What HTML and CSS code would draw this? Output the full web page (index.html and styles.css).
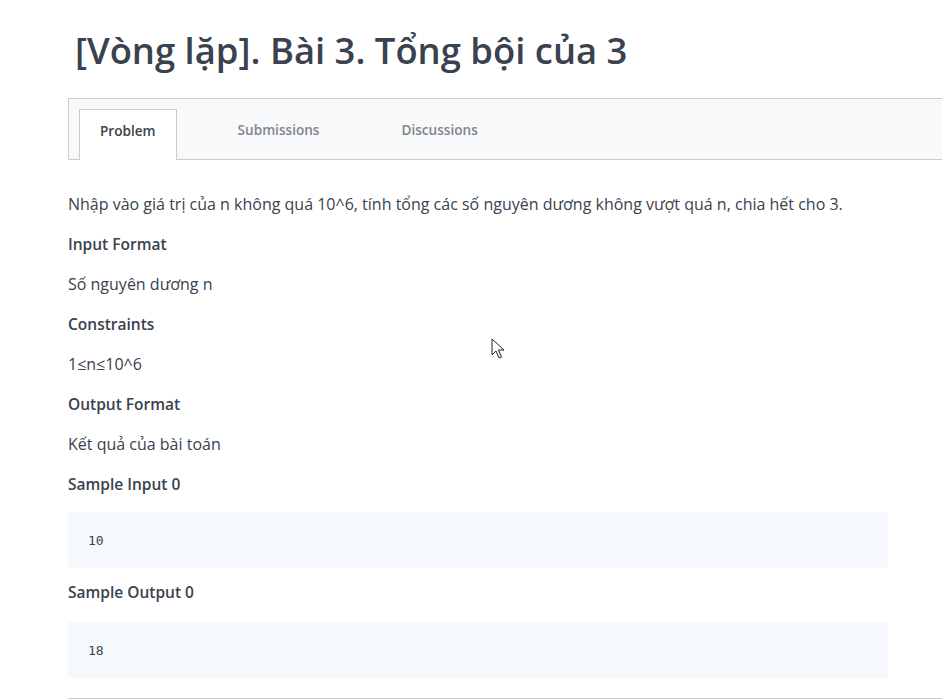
FILE: index.html
```html
<!DOCTYPE html>
<html>
<head>
<meta charset="utf-8">
<link rel="stylesheet" href="styles.css">
</head>
<body>
<div class="page">
  <h1 class="title">[Vòng lặp]. Bài 3. Tổng bội của 3</h1>
  <div class="tabs">
    <div class="tab active">Problem</div>
    <div class="tab">Submissions</div>
    <div class="tab">Discussions</div>
  </div>
  <div class="content">
    <p class="text">Nhập vào giá trị của n không quá 10^6, tính tổng các số nguyên dương không vượt quá n, chia hết cho 3.</p>
    <p class="head">Input Format</p>
    <p class="text">Số nguyên dương n</p>
    <p class="head">Constraints</p>
    <p class="text">1≤n≤10^6</p>
    <p class="head">Output Format</p>
    <p class="text">Kết quả của bài toán</p>
    <p class="head">Sample Input 0</p>
    <pre class="code">10</pre>
    <p class="head">Sample Output 0</p>
    <pre class="code">18</pre>
    <div class="rule"></div>
  </div>
</div>
<svg class="cursor" width="14" height="22" viewBox="0 0 14 22">
  <path d="M1 1 L1 17 L5 13 L8 20 L10.5 19 L7.5 12 L13 12 Z" fill="#fff" stroke="#222" stroke-width="1"/>
</svg>
</body>
</html>
```
FILE: styles.css
```css
html, body {
  margin: 0;
  padding: 0;
  background: #fff;
  overflow: hidden;
}
body {
  font-family: "Open Sans", "Liberation Sans", sans-serif;
  color: #39424e;
  width: 942px;
  height: 699px;
}
.page {
  padding-left: 68px;
}
.title {
  margin: 0;
  padding: 26px 0 0 7px;
  font-size: 36.4px;
  font-weight: 600;
  line-height: 48px;
  color: #39424e;
  box-sizing: border-box;
  height: 98px;
}
.tabs {
  display: flex;
  height: 62px;
  box-sizing: border-box;
  border: 1px solid #c9cbce;
  border-right: none;
  background: #f8f9fa;
  padding-left: 10px;
  align-items: flex-end;
}
.tab {
  font-size: 13.6px;
  font-weight: 600;
  color: #80858c;
  padding: 0 21px;
  margin-right: 40px;
  text-align: center;
  height: 50px;
  line-height: 42px;
  box-sizing: border-box;
}
.tab.active {
  background: #fff;
  color: #39424e;
  border: 1px solid #c9cbce;
  border-bottom: none;
  padding: 0 20px;
  height: 51px;
  margin-bottom: -1px;
  line-height: 41px;
}
.content {
  padding-top: 32px;
  width: 874px;
}
.text, .head {
  margin: 0 0 16px;
  font-size: 16px;
  line-height: 24px;
}
.head {
  font-weight: 600;
  font-size: 15.5px;
}
.code {
  margin: 0 0 12px;
  background: #f5f9fd;
  height: 56px;
  padding: 0 20px;
  width: 820px;
  box-sizing: border-box;
  font-family: "DejaVu Sans Mono", monospace;
  font-size: 13px;
  line-height: 58px;
  color: #39424e;
}
.code + .head {
  margin-bottom: 18px;
}
.rule {
  height: 1px;
  background: #c9cbce;
  margin-top: 20px;
}
.cursor {
  position: absolute;
  left: 491px;
  top: 338px;
}
```
